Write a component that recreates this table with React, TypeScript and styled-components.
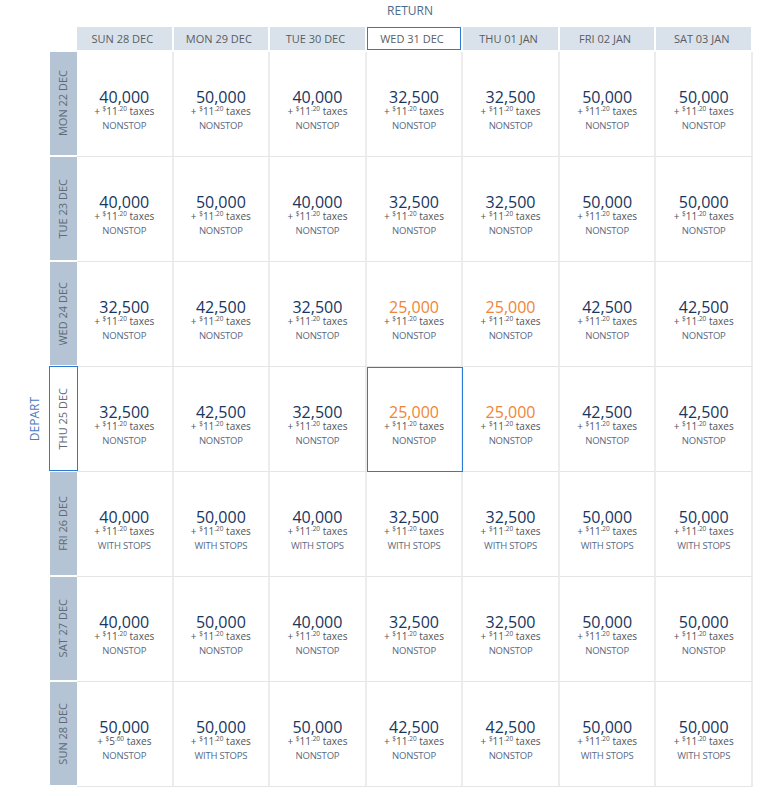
import React from 'react';
import styled, { createGlobalStyle } from 'styled-components';

const GlobalStyle = createGlobalStyle`
  html, body {
    margin: 0;
    padding: 0;
    background: #fff;
  }
  body {
    font-family: 'Open Sans', 'Liberation Sans', sans-serif;
  }
`;

const BLUE = '#2a7ad6';

const Page = styled.div`
  width: 772px;
  height: 796px;
  box-sizing: border-box;
  padding-top: 3px;
`;

const ReturnTitle = styled.div`
  height: 24px;
  margin-left: 77px;
  width: 666px;
  text-align: center;
  font-size: 12px;
  line-height: 16px;
  color: #4d6a8b;
`;

const Main = styled.div`
  display: flex;
`;

const DepartCol = styled.div`
  width: 50px;
  box-sizing: border-box;
  padding: 25px 8px 0 0;
  display: flex;
  align-items: center;
  justify-content: flex-end;
`;

const DepartText = styled.div`
  writing-mode: vertical-rl;
  transform: rotate(180deg);
  font-size: 12px;
  line-height: 14px;
  color: #4b7bbd;
`;

const Table = styled.div`
  width: 703px;
`;

const HeaderRow = styled.div`
  display: grid;
  grid-template-columns: 27px repeat(7, 1fr);
  height: 23px;
  margin-bottom: 2px;
`;

const Corner = styled.div``;

const HeadCell = styled.div<{ $active?: boolean }>`
  display: flex;
  align-items: center;
  justify-content: center;
  box-sizing: border-box;
  border-right: 2px solid #fff;
  background: ${(p) => (p.$active ? '#fff' : '#d9e2ea')};
  box-shadow: ${(p) => (p.$active ? `inset 0 0 0 1px ${BLUE}` : 'none')};
  font-size: 11px;
  color: #5a5d62;
  padding-right: 4px;
`;

const BodyRow = styled.div`
  display: grid;
  grid-template-columns: 27px repeat(7, 1fr);
  align-items: start;
`;

const RowLabel = styled.div<{ $active?: boolean }>`
  height: 103px;
  margin-bottom: 2px;
  display: flex;
  align-items: center;
  justify-content: center;
  background: ${(p) => (p.$active ? '#fff' : '#b5c4d4')};
  outline: ${(p) => (p.$active ? `1px solid ${BLUE}` : 'none')};
`;

const RowLabelText = styled.div`
  writing-mode: vertical-rl;
  transform: rotate(180deg);
  font-size: 11px;
  line-height: 13px;
  color: #5e6a77;
  margin-left: -3px;
`;

const Cell = styled.div<{ $active?: boolean }>`
  height: 105px;
  box-sizing: border-box;
  border-right: 2px solid #ececec;
  border-bottom: 1px solid #e5e5e5;
  padding-top: 37px;
  display: flex;
  flex-direction: column;
  align-items: center;
  outline: ${(p) => (p.$active ? `1px solid ${BLUE}` : 'none')};
  outline-offset: -1px;
`;

const Price = styled.div<{ $deal?: boolean }>`
  font-size: 16px;
  line-height: 17px;
  color: ${(p) => (p.$deal ? '#f08537' : '#173660')};
`;

const Taxes = styled.div`
  font-size: 10px;
  line-height: 11px;
  color: #50545a;
  white-space: nowrap;
`;

const Sup = styled.span`
  font-size: 6.5px;
  line-height: 0;
  vertical-align: 4px;
`;

const Stops = styled.div`
  margin-top: 2px;
  font-size: 9.5px;
  line-height: 14px;
  color: #5a6a82;
  letter-spacing: -0.2px;
`;

type Fare = { price: string; dollars?: string; cents?: string; stops?: boolean; deal?: boolean };

const returns = ['SUN 28 DEC', 'MON 29 DEC', 'TUE 30 DEC', 'WED 31 DEC', 'THU 01 JAN', 'FRI 02 JAN', 'SAT 03 JAN'];

const base = ['40,000', '50,000', '40,000', '32,500', '32,500', '50,000', '50,000'];
const mid = ['32,500', '42,500', '32,500', '25,000', '25,000', '42,500', '42,500'];

const plain = (list: string[], stops = false): Fare[] =>
  list.map((price) => ({ price, stops, deal: price === '25,000' }));

const rows: { label: string; fares: Fare[] }[] = [
  { label: 'MON 22 DEC', fares: plain(base) },
  { label: 'TUE 23 DEC', fares: plain(base) },
  { label: 'WED 24 DEC', fares: plain(mid) },
  { label: 'THU 25 DEC', fares: plain(mid) },
  { label: 'FRI 26 DEC', fares: plain(base, true) },
  { label: 'SAT 27 DEC', fares: plain(base) },
  {
    label: 'SUN 28 DEC',
    fares: [
      { price: '50,000', dollars: '5', cents: '60' },
      { price: '50,000', stops: true },
      { price: '50,000' },
      { price: '42,500' },
      { price: '42,500' },
      { price: '50,000', stops: true },
      { price: '50,000', stops: true },
    ],
  },
];

const ACTIVE_ROW = 3;
const ACTIVE_COL = 3;

const App: React.FC = () => {
  return (
    <Page>
      <GlobalStyle />
      <ReturnTitle>RETURN</ReturnTitle>
      <Main>
        <DepartCol>
          <DepartText>DEPART</DepartText>
        </DepartCol>
        <Table>
          <HeaderRow>
            <Corner />
            {returns.map((r, i) => (
              <HeadCell key={r} $active={i === ACTIVE_COL}>
                {r}
              </HeadCell>
            ))}
          </HeaderRow>
          {rows.map((row, ri) => (
            <BodyRow key={row.label}>
              <RowLabel $active={ri === ACTIVE_ROW}>
                <RowLabelText>{row.label}</RowLabelText>
              </RowLabel>
              {row.fares.map((f, ci) => (
                <Cell key={ci} $active={ri === ACTIVE_ROW && ci === ACTIVE_COL}>
                  <Price $deal={f.deal}>{f.price}</Price>
                  <Taxes>
                    + <Sup>$</Sup>
                    {f.dollars ?? '11'}
                    <Sup>.{f.cents ?? '20'}</Sup> taxes
                  </Taxes>
                  <Stops>{f.stops ? 'WITH STOPS' : 'NONSTOP'}</Stops>
                </Cell>
              ))}
            </BodyRow>
          ))}
        </Table>
      </Main>
    </Page>
  );
};

export default App;
